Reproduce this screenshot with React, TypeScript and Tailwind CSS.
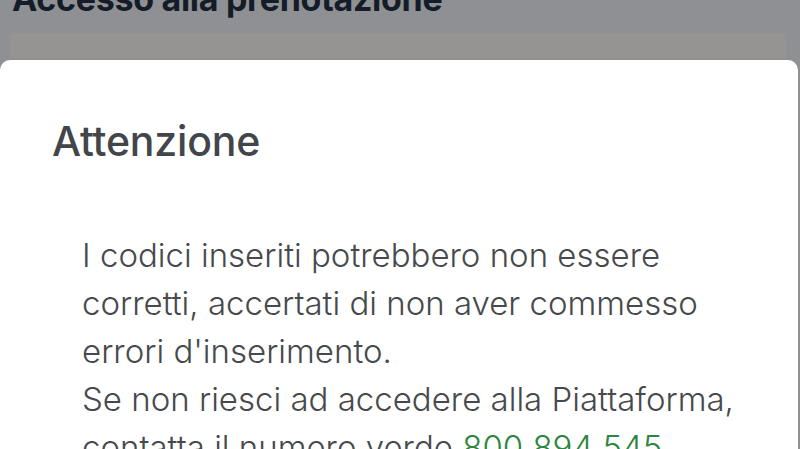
export default function App() {
  return (
    <div className="w-[800px] h-[449px] overflow-hidden bg-[#8e9094] font-['Inter','Liberation_Sans',sans-serif]">
      {/* page behind the overlay */}
      <h1 className="-mt-[20px] pl-[12px] text-[34px] leading-[38px] font-bold text-[#141c28] tracking-[-0.3px]">
        Accesso alla prenotazione
      </h1>
      <div className="mt-[15px] mx-[10px] mr-[14px] h-[25px] bg-[#959492] rounded-[2px]"></div>

      {/* modal sheet */}
      <div className="mt-[2px] mr-[2px] bg-white rounded-t-[10px] pt-[56px] pl-[52px] pr-[30px]">
        <h2 className="text-[41px] leading-[50px] font-medium text-[#424549] tracking-[-0.2px]">Attenzione</h2>
        <div className="mt-[65px] pl-[30px] text-[33px] leading-[48px] font-light text-[#47494c]">
          <p>
            I codici inseriti potrebbero non essere
            <br />
            corretti, accertati di non aver commesso
            <br />
            errori d'inserimento.
          </p>
          <p>
            Se non riesci ad accedere alla Piattaforma,
            <br />
            contatta il numero verde <span className="text-[#2e8540]">800 894 545</span>
          </p>
        </div>
      </div>
    </div>
  );
}
